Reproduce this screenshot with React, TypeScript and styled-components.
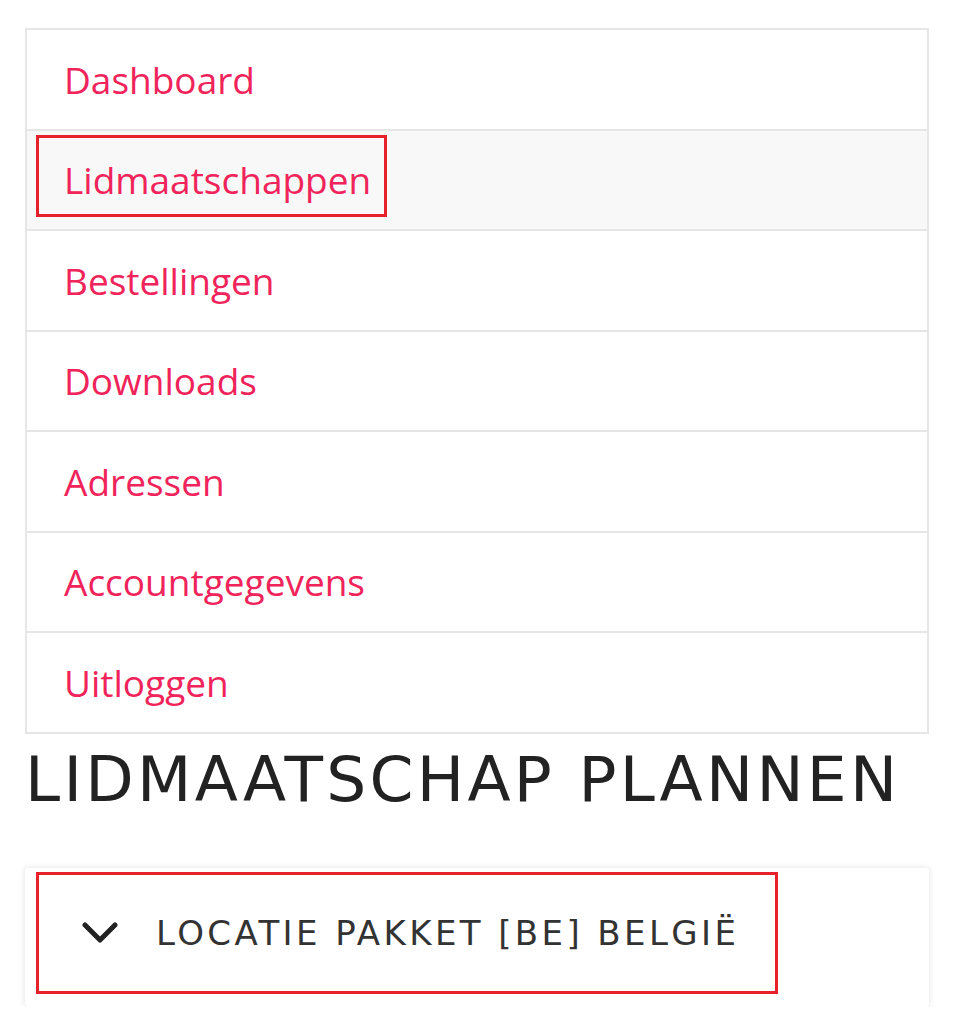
import React from 'react';
import styled, { createGlobalStyle } from 'styled-components';

const GlobalStyle = createGlobalStyle`
	body {
		margin: 0;
		background: #ffffff;
		font-family: 'Open Sans', sans-serif;
	}
`;

const Page = styled.div`
	width: 904px;
	padding: 28px 0 0 25px;
`;

const Nav = styled.ul`
	list-style: none;
	margin: 0;
	padding: 0;
	border: 2px solid #e6e6e6;
	border-bottom: none;
`;

const Item = styled.li<{ $active?: boolean }>`
	height: 98.5px;
	border-bottom: 2px solid #e6e6e6;
	background: ${(p) => (p.$active ? '#f8f8f8' : '#ffffff')};
	display: flex;
	align-items: center;
	padding-left: 9px;
`;

const Link = styled.a<{ $marked?: boolean }>`
	display: flex;
	align-items: center;
	height: 68px;
	padding: 8px 13px 0 25px;
	margin-bottom: 8px;
	border: 3px solid ${(p) => (p.$marked ? '#e8202a' : 'transparent')};
	color: #f0245a;
	font-size: 37px;
	text-decoration: none;
	cursor: pointer;
`;

const Heading = styled.h1`
	margin: 2px 0 0;
	font-family: 'DejaVu Sans', sans-serif;
	font-weight: 400;
	font-size: 63px;
	letter-spacing: 3.3px;
	line-height: 88px;
	color: #222222;
	white-space: nowrap;
`;

const Card = styled.div`
	margin-top: 44px;
	height: 139px;
	border-radius: 3px;
	background: #ffffff;
	box-shadow: 0 0 6px rgba(0, 0, 0, 0.12);
	padding: 4px 0 0 11px;
	box-sizing: border-box;
`;

const Toggle = styled.button`
	display: flex;
	align-items: center;
	gap: 38px;
	width: 742px;
	height: 122px;
	box-sizing: border-box;
	border: 3px solid #e8202a;
	background: transparent;
	padding: 0 0 0 43px;
	font-family: 'DejaVu Sans', sans-serif;
	font-size: 34px;
	letter-spacing: 3.4px;
	color: #333333;
	white-space: nowrap;
	cursor: pointer;
`;

const Chevron = () => (
	<svg width="36" height="22" viewBox="0 0 36 22" fill="none">
		<path d="M3 3 L18 18 L33 3" stroke="#222" strokeWidth="5" strokeLinecap="round" strokeLinejoin="round" />
	</svg>
);

const links = ['Dashboard', 'Lidmaatschappen', 'Bestellingen', 'Downloads', 'Adressen', 'Accountgegevens', 'Uitloggen'];

const App = () => {
	return (
		<Page>
			<GlobalStyle />
			<Nav>
				{links.map((l) => (
					<Item key={l} $active={l === 'Lidmaatschappen'}>
						<Link $marked={l === 'Lidmaatschappen'}>{l}</Link>
					</Item>
				))}
			</Nav>
			<Heading>LIDMAATSCHAP PLANNEN</Heading>
			<Card>
				<Toggle>
					<Chevron />
					LOCATIE PAKKET [BE] BELGIË
				</Toggle>
			</Card>
		</Page>
	);
};

export default App;
